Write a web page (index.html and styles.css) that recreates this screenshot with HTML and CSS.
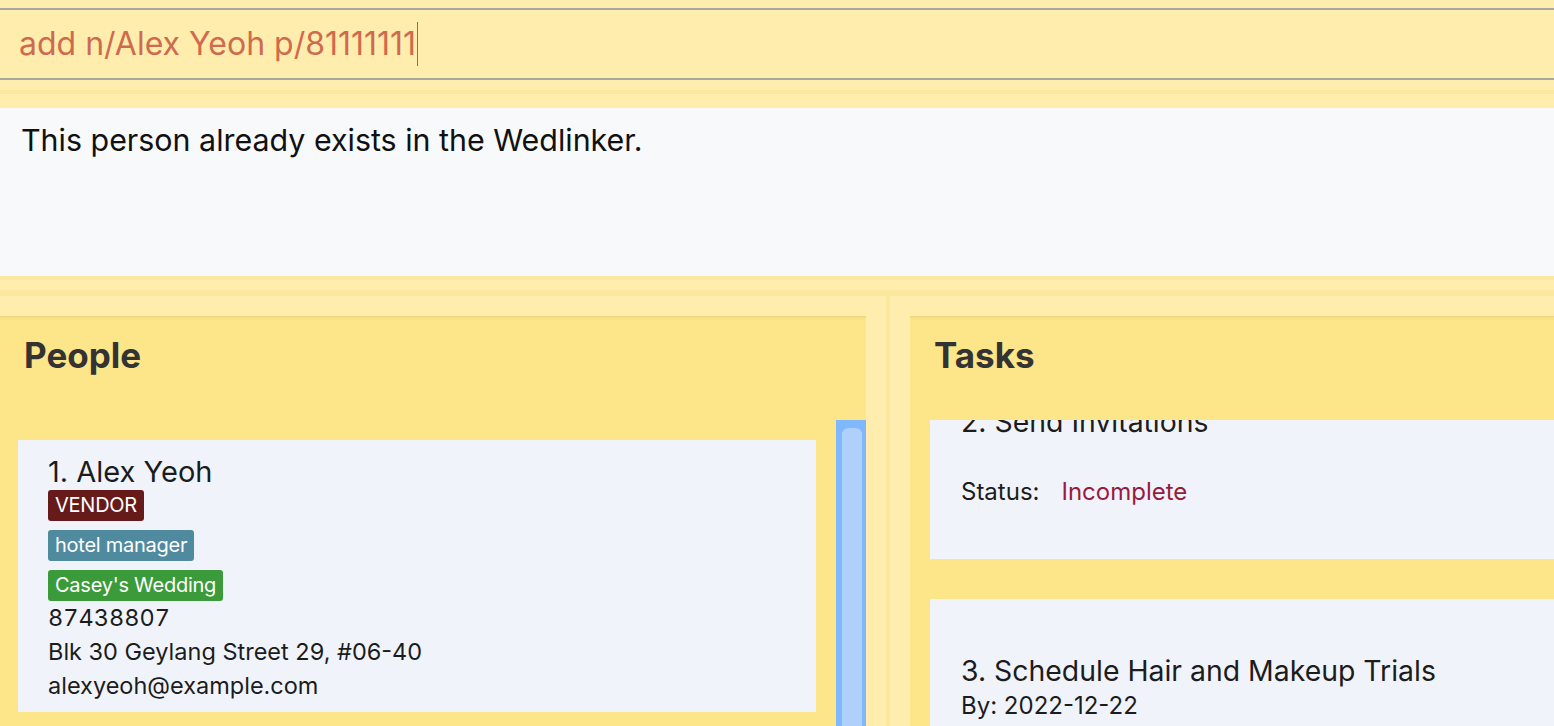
FILE: index.html
```html
<!DOCTYPE html>
<html lang="en">
<head>
<meta charset="utf-8">
<title>Wedlinker</title>
<link rel="stylesheet" href="styles.css">
</head>
<body>
<div class="app">
  <div class="command-area">
    <div class="command-box">
      <span class="cmd-text">add n/Alex Yeoh p/81111111</span><span class="caret"></span>
    </div>
  </div>
  <div class="result-area">
    <div class="result-frame">
      <div class="result-box">This person already exists in the Wedlinker.</div>
    </div>
  </div>
  <div class="main">
    <div class="pane pane-left">
      <section class="panel">
        <header class="panel-header"><h2 class="panel-title">People</h2></header>
        <div class="list-viewport">
          <div class="person-list">
            <div class="person-card">
              <div class="person-name">1. Alex Yeoh</div>
              <div class="tags">
                <span class="tag tag-role">VENDOR</span>
                <span class="tag tag-job">hotel manager</span>
                <span class="tag tag-wedding">Casey's Wedding</span>
              </div>
              <div class="person-line person-phone">87438807</div>
              <div class="person-line">Blk 30 Geylang Street 29, #06-40</div>
              <div class="person-line">alexyeoh@example.com</div>
            </div>
          </div>
          <div class="scrollbar"><div class="thumb"></div></div>
        </div>
      </section>
    </div>
    <div class="divider"></div>
    <div class="pane pane-right">
      <section class="panel">
        <header class="panel-header"><h2 class="panel-title">Tasks</h2></header>
        <div class="list-viewport">
          <div class="task-list">
            <div class="task-card">
              <div class="task-title">2. Send Invitations</div>
              <div class="task-date"></div>
              <div class="task-status"><span class="status-label">Status:</span><span class="status-value">Incomplete</span></div>
            </div>
            <div class="task-card">
              <div class="task-title">3. Schedule Hair and Makeup Trials</div>
              <div class="task-date">By: 2022-12-22</div>
              <div class="task-status"><span class="status-label">Status:</span><span class="status-value">Incomplete</span></div>
            </div>
          </div>
        </div>
      </section>
    </div>
  </div>
</div>
</body>
</html>
```
FILE: styles.css
```css
* { box-sizing: border-box; }

html, body {
  margin: 0;
  padding: 0;
  height: 726px;
  overflow: hidden;
}

body {
  font-family: Inter, "Noto Sans", "Liberation Sans", sans-serif;
  background: #FFEDAD;
  color: #1c1c1c;
}

.app {
  display: flex;
  flex-direction: column;
  height: 726px;
}

/* command box */
.command-area {
  padding-top: 8px;
}

.command-box {
  height: 72px;
  border-top: 2px solid #a7a7a2;
  border-bottom: 2px solid #a7a7a2;
  background: #FFEDAD;
  display: flex;
  align-items: center;
  padding-left: 19px;
}

.cmd-text {
  font-size: 32px;
  line-height: 36px;
  color: #CF6A4E;
}

.caret {
  display: inline-block;
  width: 1px;
  height: 44px;
  background: #b4604a;
  margin-left: 1px;
}

/* result */
.result-area {
  padding: 10px 0;
}

.result-frame {
  border-top: 4px solid #FCE79E;
  border-bottom: 4px solid #FCE79E;
  padding-top: 14px;
}

.result-box {
  height: 168px;
  background: #F8F9FB;
  padding: 14px 21px;
  font-size: 30.4px;
  line-height: 36px;
  color: #111;
}

/* main split */
.main {
  flex: 1;
  display: flex;
  border-top: 6px solid #FCE79E;
  min-height: 0;
}

.pane {
  display: flex;
  min-height: 0;
}

.pane-left {
  width: 886px;
  padding: 20px 20px 0 0;
}

.divider {
  width: 4px;
  background: #FCE79E;
}

.pane-right {
  flex: 1;
  padding: 20px 0 0 20px;
}

.panel {
  flex: 1;
  display: flex;
  flex-direction: column;
  background: #FDE58A;
  min-height: 0;
}

.panel-header {
  height: 104px;
  background: linear-gradient(to bottom, #EFD57A 0, #F8DF85 2px, #FDE58A 5px);
  padding: 17px 0 0 24px;
}

.panel-title {
  margin: 0;
  font-size: 35px;
  line-height: 44px;
  font-weight: 700;
  color: #333333;
}

.list-viewport {
  flex: 1;
  display: flex;
  overflow: hidden;
  min-height: 0;
}

/* people */
.person-list {
  flex: 1;
  padding: 20px 20px 0 18px;
}

.person-card {
  background: #F0F4FA;
  padding: 15px 30px 9px;
}

.person-name {
  font-size: 29px;
  line-height: 34px;
}

.tags {
  display: flex;
  flex-direction: column;
  align-items: flex-start;
  gap: 9px;
  margin-top: 1px;
}

.tag {
  height: 31px;
  line-height: 31px;
  font-size: 20px;
  letter-spacing: -0.25px;
  color: #fff;
  padding: 0 7px;
  border-radius: 3px;
}

.tag-role { background: #661A1A; }
.tag-job { background: #508A9E; }
.tag-wedding { background: #3B9B3A; }

.person-line {
  font-size: 23.5px;
  line-height: 34px;
}

.person-phone {
  font-variant-numeric: tabular-nums;
}

.scrollbar {
  width: 30px;
  background: #80B8FF;
  padding: 8px 4px 0 6px;
}

.thumb {
  height: 100%;
  background: #AED0FA;
  border-radius: 6px 6px 0 0;
}

/* tasks */
.task-list {
  flex: 1;
  padding-left: 20px;
  margin-top: -70px;
  display: flex;
  flex-direction: column;
  gap: 40px;
}

.task-card {
  background: #F0F4FA;
  padding: 55px 31px 50px;
}

.task-title {
  font-size: 28.4px;
  line-height: 34px;
}

.task-date {
  min-height: 35px;
  font-size: 24px;
  line-height: 34px;
  margin-top: 1px;
}

.task-status {
  font-size: 24px;
  line-height: 34px;
  display: flex;
  gap: 22px;
}

.status-value {
  color: #991B3B;
}
```
